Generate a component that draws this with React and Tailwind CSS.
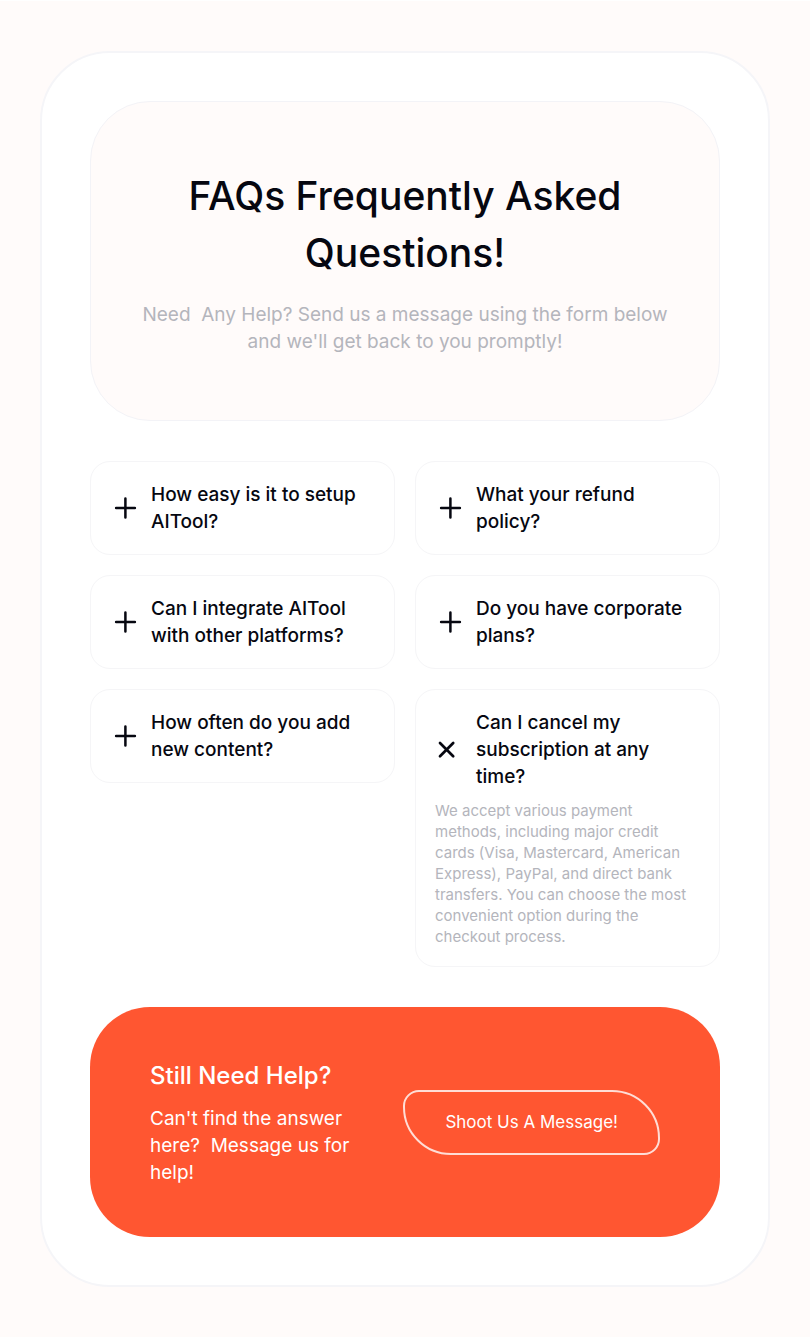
import { useState } from "react";

const columns = [
  [
    { id: "setup", q: "How easy is it to setup\nAITool?" },
    { id: "integrate", q: "Can I integrate AITool\nwith other platforms?" },
    { id: "content", q: "How often do you add\nnew content?" },
  ],
  [
    { id: "refund", q: "What your refund\npolicy?" },
    { id: "corporate", q: "Do you have corporate\nplans?" },
    { id: "cancel", q: "Can I cancel my\nsubscription at any\ntime?" },
  ],
];

const answer =
  "We accept various payment\nmethods, including major credit\ncards (Visa, Mastercard, American\nExpress), PayPal, and direct bank\ntransfers. You can choose the most\nconvenient option during the\ncheckout process.";

function PlusIcon() {
  return (
    <svg className="ml-1 h-6 w-6" viewBox="0 0 24 24" fill="none" stroke="currentColor" strokeWidth="2.5" strokeLinecap="round" aria-hidden="true">
      <path d="M11.4 2.6v18.8M2.1 12h18.8" />
    </svg>
  );
}

function CloseIcon() {
  return (
    <svg className="h-6 w-6" viewBox="0 0 24 24" fill="none" stroke="currentColor" strokeWidth="2.7" strokeLinecap="round" aria-hidden="true">
      <path d="M5 5l13.2 13.2M18.2 5L5 18.2" />
    </svg>
  );
}

function FaqItem({ item, open, onToggle }) {
  return (
    <div className="rounded-[20px] border border-[#f5f5f7] bg-white p-[19px]">
      <button
        type="button"
        aria-expanded={open}
        aria-controls={`answer-${item.id}`}
        onClick={onToggle}
        className="flex w-full items-center text-left text-[#060710]"
      >
        <span className="w-[41px] shrink-0">{open ? <CloseIcon /> : <PlusIcon />}</span>
        <span className="whitespace-pre-wrap text-[19px]/[27px] font-medium">{item.q}</span>
      </button>
      {open && (
        <p id={`answer-${item.id}`} className="mt-[10px] whitespace-pre-wrap text-[15px]/[21px] text-[#b4b5bc]">
          {answer}
        </p>
      )}
    </div>
  );
}

export default function App() {
  const [openId, setOpenId] = useState("cancel");

  return (
    <div className="min-h-screen border-t border-white bg-[#fffbfa] px-10 py-[50px] font-['Inter',sans-serif]">
      <main className="flex flex-col gap-10 rounded-[70px] border-2 border-[#f5f5f8] bg-white p-12">
        <header className="rounded-[60px] border border-[#f3f3f7] bg-[#fffbfa] px-5 py-[65px] text-center">
          <h1 className="whitespace-pre-wrap text-[39px]/[57px] font-medium text-[#060710]">
            {"FAQs Frequently Asked\nQuestions!"}
          </h1>
          <p className="mt-5 whitespace-pre-wrap text-[19px]/[27px] text-[#b4b5bc]">
            {"Need  Any Help? Send us a message using the form below\nand we'll get back to you promptly!"}
          </p>
        </header>

        <section aria-label="Questions" className="grid grid-cols-2 items-start gap-5">
          {columns.map((items, i) => (
            <div key={i} className="flex flex-col gap-5">
              {items.map((item) => (
                <FaqItem
                  key={item.id}
                  item={item}
                  open={openId === item.id}
                  onToggle={() => setOpenId(openId === item.id ? null : item.id)}
                />
              ))}
            </div>
          ))}
        </section>

        <section className="flex items-center justify-between rounded-[60px] bg-[#ff5631] px-[60px] py-[51px] text-white">
          <div>
            <h2 className="text-2xl/9 font-medium">Still Need Help?</h2>
            <p className="mt-[11px] whitespace-pre-wrap text-[19px]/[27px]">
              {"Can't find the answer\nhere?  Message us for\nhelp!"}
            </p>
          </div>
          <a
            href="#contact"
            className="rounded-tl-[16px] rounded-tr-[48px] rounded-br-[16px] rounded-bl-[48px] border-2 border-white/80 px-10 py-[17px] text-[17px]/[27px]"
          >
            Shoot Us A Message!
          </a>
        </section>
      </main>
    </div>
  );
}
